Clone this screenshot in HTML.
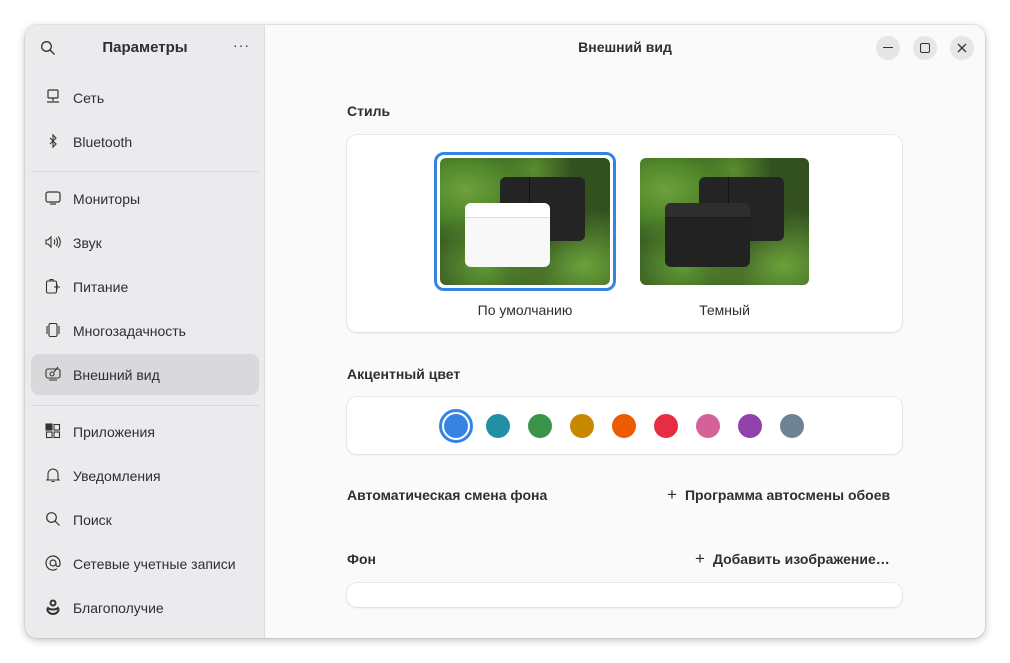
<!DOCTYPE html>
<html><head><meta charset="utf-8"><style>
*{box-sizing:border-box;margin:0;padding:0}
body{width:1010px;height:663px;background:#fff;font-family:"Liberation Sans","DejaVu Sans",sans-serif;position:relative;overflow:hidden;color:#2e2e33}
.win{position:absolute;left:25px;top:25px;width:960px;height:613px;border-radius:12px;overflow:hidden;box-shadow:0 2px 8px rgba(0,0,0,.25),0 0 0 1px rgba(0,0,0,.06);background:#fafafb}
.side{position:absolute;left:0;top:0;width:240px;height:100%;background:#ebebed;border-right:1px solid #dcdcdf}
.abs{position:absolute}
.item{position:absolute;left:6px;width:228px;height:41px;border-radius:8px;font-size:14px;display:flex;align-items:center;padding-left:42px}
.item svg{position:absolute;left:14px;top:12px}
.sep{position:absolute;left:6px;width:228px;height:1px;background:#d6d6d9}
.card{position:absolute;background:#fff;border-radius:10px;box-shadow:0 0 0 1px rgba(0,0,0,.05),0 1px 3px rgba(0,0,0,.08)}
.h{position:absolute;font-size:14px;font-weight:bold;color:#2e2e33}
.dot{position:absolute;width:24px;height:24px;border-radius:50%;top:389px}
.btn{position:absolute;width:24px;height:24px;border-radius:50%;background:#e6e6e8;top:11px}
.leaf{background:radial-gradient(ellipse at 15% 25%,#6ea13c 0,#4e8429 22%,transparent 40%),radial-gradient(ellipse at 85% 85%,#6aa23a 0,transparent 38%),radial-gradient(ellipse at 25% 85%,#5f9a34 0,transparent 35%),radial-gradient(ellipse at 55% 10%,#5a8f30 0,transparent 30%),radial-gradient(ellipse at 60% 60%,#1f2a14 0,transparent 40%),#33501f}
</style></head><body>
<div class="win">
<div class="side">
<svg class="abs" style="left:15px;top:15px" width="16" height="16" viewBox="0 0 16 16" fill="none" stroke="#333" stroke-width="1.3"><circle cx="6.5" cy="6.5" r="4.8"/><path d="M10 10l4.5 4.5"/></svg>
<div class="abs" style="left:0;width:240px;top:14px;text-align:center;font-weight:bold;font-size:15px">Параметры</div>
<div class="abs" style="left:208px;top:12px;font-size:14px;letter-spacing:1px">···</div>
<div class="item" style="top:52px"><svg width="16" height="16" viewBox="0 0 16 16" fill="none" stroke="#333" stroke-width="1.2"><rect x="3" y="1" width="10" height="8" rx="1"/><path d="M8 9v3M2 13h12"/></svg>Сеть</div>
<div class="item" style="top:96px"><svg width="16" height="16" viewBox="0 0 16 16" fill="none" stroke="#333" stroke-width="1.1"><path d="M5 5l6 6-3 3V2l3 3-6 6"/></svg>Bluetooth</div>
<div class="sep" style="top:146px"></div>
<div class="item" style="top:153px"><svg width="16" height="16" viewBox="0 0 16 16" fill="none" stroke="#333" stroke-width="1.2"><rect x="1" y="2" width="14" height="10" rx="2"/><path d="M5 14h6"/></svg>Мониторы</div>
<div class="item" style="top:197px"><svg width="16" height="16" viewBox="0 0 16 16" fill="none" stroke="#333" stroke-width="1.1"><path d="M1 6h2l3-3v10l-3-3H1zM9 5.5c1 1.3 1 3.7 0 5M11 4c2 2 2 6 0 8M13 2.5c3 3 3 8 0 11"/></svg>Звук</div>
<div class="item" style="top:241px"><svg width="16" height="16" viewBox="0 0 16 16" fill="none" stroke="#333" stroke-width="1.1"><rect x="1.5" y="3" width="10" height="12" rx="1.5"/><path d="M5 3V1.5h3V3M9 9h6M12 6v6"/></svg>Питание</div>
<div class="item" style="top:285px"><svg width="16" height="16" viewBox="0 0 16 16" fill="none" stroke="#333" stroke-width="1.1"><rect x="4" y="1.5" width="8" height="13" rx="1.5"/><path d="M2 4v8M14 4v8"/></svg>Многозадачность</div>
<div class="item" style="top:329px;background:#d9d9dc"><svg width="16" height="16" viewBox="0 0 16 16" fill="none" stroke="#333" stroke-width="1.1"><rect x="1" y="3" width="14" height="9" rx="2"/><circle cx="7" cy="8" r="2"/><path d="M9 6l4-5M4 14h8"/></svg>Внешний вид</div>
<div class="sep" style="top:380px"></div>
<div class="item" style="top:386px"><svg width="16" height="16" viewBox="0 0 16 16" stroke="#333" stroke-width="1.1"><rect x="1" y="1" width="6" height="6" fill="#333"/><rect x="9" y="1.5" width="5.5" height="5.5" fill="none"/><rect x="1.5" y="9" width="5.5" height="5.5" fill="none"/><rect x="9" y="9" width="5.5" height="5.5" fill="none"/></svg>Приложения</div>
<div class="item" style="top:430px"><svg width="16" height="16" viewBox="0 0 16 16" fill="none" stroke="#333" stroke-width="1.1"><path d="M3 12V7a5 5 0 0110 0v5l1 1H2zM6.5 14.5h3"/></svg>Уведомления</div>
<div class="item" style="top:474px"><svg width="16" height="16" viewBox="0 0 16 16" fill="none" stroke="#333" stroke-width="1.2"><circle cx="6.5" cy="6.5" r="4.8"/><path d="M10 10l4.5 4.5"/></svg>Поиск</div>
<div class="item" style="top:518px"><svg width="16" height="16" viewBox="0 0 16 16" fill="none" stroke="#333" stroke-width="1.2"><circle cx="8" cy="8" r="3"/><path d="M11 8v1.5a2 2 0 004 0V8a7 7 0 10-3 5.8"/></svg>Сетевые учетные записи</div>
<div class="item" style="top:562px"><svg width="16" height="16" viewBox="0 0 16 16" fill="none" stroke="#333" stroke-width="2"><circle cx="8" cy="4" r="2.5"/><path d="M3 9c-2 3 2 6 5 6s7-3 5-6c-2 2-8 2-10 0z"/></svg>Благополучие</div>
</div>
<div class="abs" style="left:240px;width:720px;top:14px;text-align:center;font-weight:bold;font-size:14px">Внешний вид</div>
<div class="btn" style="left:851px"><div class="abs" style="left:7px;top:11px;width:10px;height:1.3px;background:#333"></div></div>
<div class="btn" style="left:888px"><div class="abs" style="left:7px;top:7px;width:10px;height:10px;border:1.3px solid #333;border-radius:2px"></div></div>
<div class="btn" style="left:925px"><svg class="abs" style="left:7px;top:7px" width="10" height="10" viewBox="0 0 10 10" stroke="#333" stroke-width="1.3"><path d="M1 1l8 8M9 1l-8 8"/></svg></div>

<div class="h" style="left:322px;top:78px">Стиль</div>
<div class="card" style="left:322px;top:110px;width:555px;height:197px"></div>
<div class="abs" style="left:409px;top:127px;width:182px;height:139px;border:3px solid #3584e4;border-radius:10px"></div>
<div class="abs leaf" style="left:415px;top:133px;width:170px;height:127px;border-radius:6px;overflow:hidden">
<div class="abs" style="left:60px;top:19px;width:85px;height:64px;background:#242424;border-radius:6px"><div class="abs" style="left:29px;top:0;width:1px;height:64px;background:#111"></div></div>
<div class="abs" style="left:25px;top:45px;width:85px;height:64px;background:#f8f8f8;border-radius:6px;overflow:hidden"><div style="height:15px;background:#fff;border-bottom:1px solid #ddd"></div></div>
</div>
<div class="abs leaf" style="left:615px;top:133px;width:169px;height:127px;border-radius:6px;overflow:hidden">
<div class="abs" style="left:59px;top:19px;width:85px;height:64px;background:#242424;border-radius:6px"><div class="abs" style="left:29px;top:0;width:1px;height:64px;background:#111"></div></div>
<div class="abs" style="left:25px;top:45px;width:85px;height:64px;background:#222;border-radius:6px;overflow:hidden"><div style="height:15px;background:#2e2e2e;border-bottom:1px solid #1a1a1a"></div></div>
</div>
<div class="abs" style="left:409px;width:182px;top:277px;text-align:center;font-size:14px">По умолчанию</div>
<div class="abs" style="left:615px;width:169px;top:277px;text-align:center;font-size:14px">Темный</div>

<div class="h" style="left:322px;top:341px">Акцентный цвет</div>
<div class="card" style="left:322px;top:372px;width:555px;height:57px"></div>
<div class="abs" style="left:414px;top:384px;width:34px;height:34px;border-radius:50%;border:3px solid #3584e4"></div>
<div class="dot" style="left:419px;background:#3584e4"></div>
<div class="dot" style="left:461px;background:#2190a4"></div>
<div class="dot" style="left:503px;background:#3a944a"></div>
<div class="dot" style="left:545px;background:#c88800"></div>
<div class="dot" style="left:587px;background:#ed5b00"></div>
<div class="dot" style="left:629px;background:#e62d42"></div>
<div class="dot" style="left:671px;background:#d56199"></div>
<div class="dot" style="left:713px;background:#9141ac"></div>
<div class="dot" style="left:755px;background:#6f8396"></div>

<div class="h" style="left:322px;top:462px">Автоматическая смена фона</div>
<div class="h" style="left:642px;top:460px;font-weight:bold"><span style="font-weight:normal;font-size:17px;margin-right:8px">+</span>Программа автосмены обоев</div>
<div class="h" style="left:322px;top:526px">Фон</div>
<div class="h" style="left:670px;top:524px"><span style="font-weight:normal;font-size:17px;margin-right:8px">+</span>Добавить изображение…</div>
<div class="card" style="left:322px;top:558px;width:555px;height:24px"></div>
</div>
</body></html>
